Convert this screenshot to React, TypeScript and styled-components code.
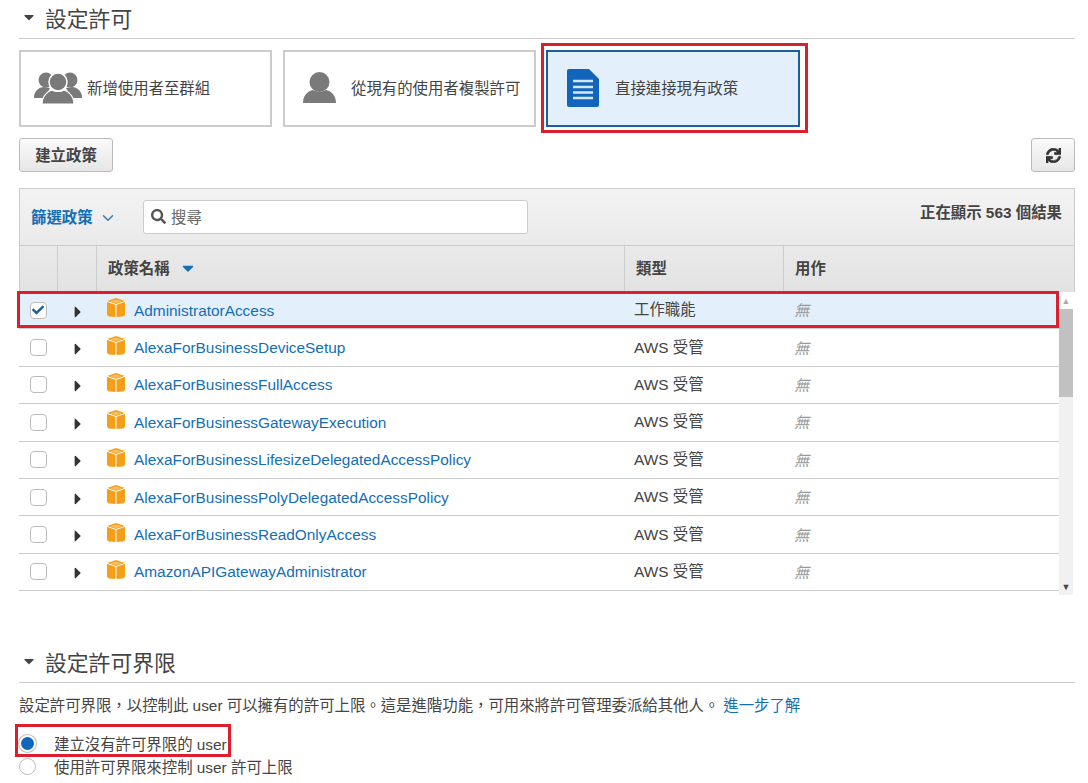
import styled, { createGlobalStyle } from "styled-components";
import { FaSearch, FaSync, FaCheck, FaCaretDown, FaCaretRight } from "react-icons/fa";
import { FiChevronDown } from "react-icons/fi";

const GlobalStyle = createGlobalStyle`
  html, body { margin: 0; background: #fff; overflow: hidden; }
  body {
    font-family: "Liberation Sans", "Noto Sans CJK TC", sans-serif;
    font-size: 15.4px;
    color: #444;
  }
`;

const Page = styled.div`
  position: relative;
  width: 1088px;
  height: 783px;
  padding: 0 13px 0 19px;
  box-sizing: border-box;
  overflow: hidden;
`;

const SectionHeader = styled.div<{ $top: number; $height: number; $bottom: number }>`
  display: flex;
  align-items: center;
  gap: 8px;
  margin-top: ${(p) => p.$top}px;
  height: ${(p) => p.$height}px;
  box-sizing: border-box;
  padding: 0 0 ${(p) => p.$bottom}px 2px;
  border-bottom: 1px solid #ccc;
  font-size: 21.8px;
  color: #444;
  & > svg { font-size: 16px; color: #444; }
`;

const Cards = styled.div`
  display: flex;
  gap: 11px;
  margin-top: 11px;
`;

const Card = styled.div<{ $selected?: boolean; $width: number; $gap: number; $pad: number }>`
  display: flex;
  align-items: center;
  gap: ${(p) => p.$gap}px;
  width: ${(p) => p.$width}px;
  height: 77px;
  box-sizing: border-box;
  margin-left: ${(p) => (p.$selected ? "-1px" : "0")};
  padding: 0 0 2px ${(p) => p.$pad}px;
  border: 2px solid ${(p) => (p.$selected ? "#1a5f9e" : "#ccc")};
  background: ${(p) => (p.$selected ? "#e3f0fc" : "#fff")};
  color: #444;
`;

const CardLabel = styled.span`
  margin-top: -2px;
`;

const ActionRow = styled.div`
  display: flex;
  justify-content: space-between;
  margin-top: 11px;
`;

const GreyButton = styled.button<{ $width: number }>`
  width: ${(p) => p.$width}px;
  height: 34px;
  padding: 0 0 3px;
  border: 1px solid #bbb;
  border-radius: 3px;
  background: linear-gradient(#fafafa, #e6e6e6);
  font: bold 15.4px "Liberation Sans", "Noto Sans CJK TC", sans-serif;
  color: #444;
  display: flex;
  align-items: center;
  justify-content: center;
  & > svg { color: #333; margin-top: 3px; }
`;

const TableHead = styled.div`
  margin-top: 16px;
  border: 1px solid #ccc;
  border-bottom: none;
  background: linear-gradient(#f3f3f3, #e2e2e2);
`;

const FilterBar = styled.div`
  display: flex;
  align-items: center;
  height: 57px;
  padding: 0 12px 0 11px;
  border-bottom: 1px solid #ccc;
  box-sizing: border-box;
`;

const FilterLabel = styled.span`
  display: flex;
  align-items: center;
  gap: 6px;
  width: 112px;
  margin-top: -3px;
  font-weight: bold;
  color: #146eb4;
  & > svg { font-size: 18px; color: #3f78ab; margin-top: 5px; }
`;

const SearchBox = styled.div`
  display: flex;
  align-items: center;
  gap: 5px;
  width: 385px;
  height: 34px;
  box-sizing: border-box;
  padding: 0 0 3px 7px;
  background: #fff;
  border: 1px solid #ccc;
  border-radius: 3px;
  color: #666;
  & > svg { font-size: 15px; color: #555; margin-top: 2px; }
`;

const ResultCount = styled.span`
  margin-left: auto;
  margin-top: -12px;
  font-weight: bold;
  color: #444;
`;

const ColumnsRow = styled.div`
  display: grid;
  grid-template-columns: 37px 39px 528px 159px 1fr;
  height: 46px;
  box-sizing: border-box;
`;

const ColumnHead = styled.div`
  display: flex;
  align-items: center;
  gap: 9px;
  padding: 0 0 5px 11px;
  font-weight: bold;
  color: #444;
  & + & { border-left: 1px solid #ccc; }
  & > svg { font-size: 18px; color: #146eb4; margin-top: 3px; }
`;

const TableBody = styled.div`
  display: flex;
  height: 303px;
`;

const Rows = styled.div`
  width: 1040px;
  display: flex;
  flex-direction: column;
`;

const Row = styled.div<{ $selected?: boolean }>`
  display: grid;
  grid-template-columns: 38px 39px 528px 159px 1fr;
  align-items: center;
  height: 37.4px;
  box-sizing: border-box;
  border-bottom: 1px solid #ccc;
  background: ${(p) => (p.$selected ? "#e3f0fc" : "#fff")};
`;

const CheckCell = styled.div`
  display: flex;
  justify-content: center;
`;

const Check = styled.span`
  display: flex;
  align-items: center;
  justify-content: center;
  width: 17px;
  height: 17px;
  box-sizing: border-box;
  border: 1px solid #bbb;
  border-radius: 4px;
  background: #fff;
  color: #1a5f9e;
  font-size: 12px;
`;

const ExpandCell = styled.div`
  display: flex;
  justify-content: center;
  padding: 3px 0 0 3px;
  font-size: 18px;
  color: #333;
`;

const NameCell = styled.div`
  display: flex;
  align-items: center;
  gap: 9px;
  padding-left: 11px;
  color: #146eb4;
  & > span { margin-top: 1px; }
  & > svg { margin-top: -5px; }
`;

const TypeCell = styled.div`
  padding-left: 10px;
  margin-top: -4px;
  color: #444;
`;

const NoneCell = styled.div`
  padding-left: 11px;
  margin-top: -2px;
  font-style: italic;
  color: #999;
`;

const Scrollbar = styled.div`
  width: 14px;
  display: flex;
  flex-direction: column;
  background: #f1f1f1;
`;

const ScrollArrow = styled.div<{ $color: string }>`
  height: 17px;
  display: flex;
  align-items: center;
  justify-content: center;
  font-size: 9px;
  color: ${(p) => p.$color};
  background: #fff;
`;

const ScrollArrowDown = styled(ScrollArrow)`
  margin-top: auto;
  height: 16px;
  background: #f1f1f1;
`;

const ScrollThumb = styled.div`
  height: 88px;
  background: #c1c1c1;
`;

const Paragraph = styled.p`
  margin: 13px 0 0;
  line-height: 20px;
  color: #444;
`;

const Link = styled.span`
  color: #146eb4;
  margin-left: 4px;
`;

const RadioGroup = styled.div`
  margin-top: 17px;
  display: flex;
  flex-direction: column;
  gap: 3px;
`;

const RadioRow = styled.div`
  display: flex;
  align-items: center;
  height: 20px;
  color: #444;
`;

const Radio = styled.span<{ $on?: boolean }>`
  display: block;
  width: 17px;
  height: 17px;
  flex: none;
  box-sizing: border-box;
  margin: 1px 18px 0 0;
  border-radius: 50%;
  border: ${(p) => (p.$on ? "2px solid #fff" : "1px solid #bbb")};
  background: ${(p) => (p.$on ? "#1166bb" : "#fff")};
  box-shadow: ${(p) => (p.$on ? "0 0 0 1px #bbb" : "none")};
`;

const Highlight = styled.div<{ $x: number; $y: number; $w: number; $h: number }>`
  position: absolute;
  left: ${(p) => p.$x}px;
  top: ${(p) => p.$y}px;
  width: ${(p) => p.$w}px;
  height: ${(p) => p.$h}px;
  box-sizing: border-box;
  border: 3px solid #dc1e2d;
  pointer-events: none;
`;

function GroupIcon() {
  return (
    <svg width="48" height="33" viewBox="0 0 48 33" fill="#7a7a7a">
      <circle cx="12" cy="9" r="7.500" />
      <circle cx="36" cy="9" r="7.500" />
      <path d="M0 25c1-6 6-9 10-9l6 1-4 8-2 2H0z" />
      <path d="M48 25c-1-6-6-9-10-9l-6 1 4 8 2 2h10z" />
      <circle cx="24" cy="11" r="9" stroke="#fff" strokeWidth="1.5" />
      <path d="M8 33c0-8 6-13 10-14 3 2 9 2 12 0 4 1 10 6 10 14z" stroke="#fff" strokeWidth="1.2" />
    </svg>
  );
}

function UserIcon() {
  return (
    <svg width="33" height="31" viewBox="0 0 33 31" fill="#7a7a7a">
      <circle cx="16.500" cy="10" r="10" />
      <path d="M0 31c0-8 5-12 10-13 4 2 9 2 13 0 5 1 10 5 10 13z" />
    </svg>
  );
}

function DocIcon() {
  return (
    <svg width="32" height="38" viewBox="0 0 32 38">
      <path d="M2 0h20l10 10v26a2 2 0 0 1-2 2H2a2 2 0 0 1-2-2V2a2 2 0 0 1 2-2z" fill="#1166bb" />
      <path d="M6 12h20M6 18h20M6 23.500h20M6 29h20" stroke="#d5e6f7" strokeWidth="2.400" />
    </svg>
  );
}

function BoxIcon() {
  return (
    <svg width="18" height="19" viewBox="0 0 18 19">
      <path d="M9 0l9 3v13c0 1.500-1 2.200-2 2.500L9 19l-7-.5C1 18.200 0 17.500 0 16V3z" fill="#f59f18" />
      <path d="M3 3.200L9 1.400l6 1.800-6 2z" fill="#f9bd5c" />
      <path d="M0 3.400l9 3.100 9-3.100M9 6.500V19" fill="none" stroke="#fff" strokeWidth="1" />
    </svg>
  );
}

const policies = [
  ["AdministratorAccess", "工作職能"],
  ["AlexaForBusinessDeviceSetup", "AWS 受管"],
  ["AlexaForBusinessFullAccess", "AWS 受管"],
  ["AlexaForBusinessGatewayExecution", "AWS 受管"],
  ["AlexaForBusinessLifesizeDelegatedAccessPolicy", "AWS 受管"],
  ["AlexaForBusinessPolyDelegatedAccessPolicy", "AWS 受管"],
  ["AlexaForBusinessReadOnlyAccess", "AWS 受管"],
  ["AmazonAPIGatewayAdministrator", "AWS 受管"],
];

export default function App() {
  return (
    <Page>
      <GlobalStyle />
      <SectionHeader $top={0} $height={39} $bottom={4}>
        <FaCaretDown />
        設定許可
      </SectionHeader>

      <Cards>
        <Card $width={253} $gap={5} $pad={13}>
          <GroupIcon />
          <CardLabel>新增使用者至群組</CardLabel>
        </Card>
        <Card $width={253} $gap={15} $pad={18}>
          <UserIcon />
          <CardLabel>從現有的使用者複製許可</CardLabel>
        </Card>
        <Card $selected $width={254} $gap={16} $pad={19}>
          <DocIcon />
          <CardLabel>直接連接現有政策</CardLabel>
        </Card>
      </Cards>

      <ActionRow>
        <GreyButton $width={94}>建立政策</GreyButton>
        <GreyButton $width={44}>
          <FaSync size={15} stroke="currentColor" strokeWidth={24} />
        </GreyButton>
      </ActionRow>

      <TableHead>
        <FilterBar>
          <FilterLabel>
            篩選政策
            <FiChevronDown />
          </FilterLabel>
          <SearchBox>
            <FaSearch />
            搜尋
          </SearchBox>
          <ResultCount>正在顯示 563 個結果</ResultCount>
        </FilterBar>
        <ColumnsRow>
          <ColumnHead />
          <ColumnHead />
          <ColumnHead>
            政策名稱
            <FaCaretDown />
          </ColumnHead>
          <ColumnHead>類型</ColumnHead>
          <ColumnHead>用作</ColumnHead>
        </ColumnsRow>
      </TableHead>

      <TableBody>
        <Rows>
          {policies.map(([name, type], i) => (
            <Row key={name} $selected={i === 0}>
              <CheckCell>
                <Check>{i === 0 && <FaCheck />}</Check>
              </CheckCell>
              <ExpandCell>
                <FaCaretRight />
              </ExpandCell>
              <NameCell>
                <BoxIcon />
                <span>{name}</span>
              </NameCell>
              <TypeCell>{type}</TypeCell>
              <NoneCell>無</NoneCell>
            </Row>
          ))}
        </Rows>
        <Scrollbar>
          <ScrollArrow $color="#aaa">▲</ScrollArrow>
          <ScrollThumb />
          <ScrollArrowDown $color="#444">▼</ScrollArrowDown>
        </Scrollbar>
      </TableBody>

      <SectionHeader $top={53} $height={35} $bottom={8}>
        <FaCaretDown />
        設定許可界限
      </SectionHeader>
      <Paragraph>
        設定許可界限，以控制此 user 可以擁有的許可上限。這是進階功能，可用來將許可管理委派給其他人。
        <Link>進一步了解</Link>
      </Paragraph>
      <RadioGroup>
        <RadioRow>
          <Radio $on />
          建立沒有許可界限的 user
        </RadioRow>
        <RadioRow>
          <Radio />
          使用許可界限來控制 user 許可上限
        </RadioRow>
      </RadioGroup>

      <Highlight $x={541} $y={43} $w={267} $h={90} />
      <Highlight $x={17} $y={291} $w={1042} $h={37} />
      <Highlight $x={15} $y={724} $w={216} $h={33} />
    </Page>
  );
}
